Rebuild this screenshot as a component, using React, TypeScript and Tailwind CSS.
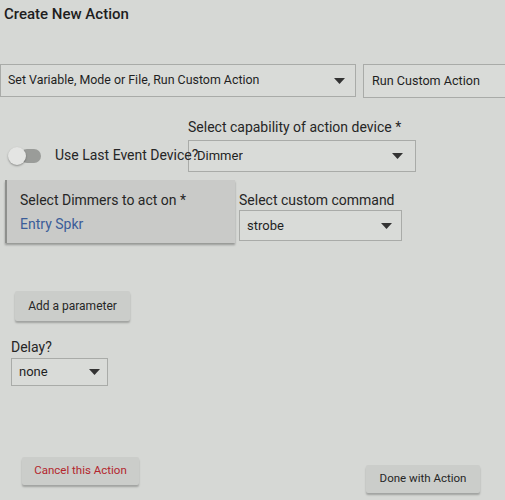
import React from 'react';

const font = { fontFamily: 'Roboto, "Liberation Sans", sans-serif' };

function Caret() {
    return (
        <svg width="11" height="6" viewBox="0 0 11 6" className="flex-shrink-0">
            <path d="M0 0 L11 0 L5.5 6 Z" fill="#333" />
        </svg>
    );
}

const SelectBox: React.FC<{ value: string; className?: string; textClass?: string; caret?: boolean }> = ({
    value,
    className = '',
    textClass = 'text-[13px]',
    caret = true,
}) => (
    <div
        className={`flex items-center justify-between border border-[#a9aba8] bg-[#d9dbd8] text-[#1f1f1f] ${className}`}
    >
        <span className={`truncate ${textClass}`}>{value}</span>
        {caret && <Caret />}
    </div>
);

const RaisedButton: React.FC<{ children: React.ReactNode; className?: string }> = ({ children, className = '' }) => (
    <button
        className={`flex items-center justify-center bg-[#cbcdca] text-[11.5px] shadow-[0_2px_2px_rgba(0,0,0,0.25)] rounded-[2px] ${className}`}
    >
        {children}
    </button>
);

export default function App() {
    return (
        <div
            style={font}
            className="w-[505px] h-[500px] overflow-hidden bg-[#d6d8d5] text-[#262626] flex flex-col"
        >
            {/* Header */}
            <h1 className="pl-[4px] pt-[4px] text-[15px] font-medium leading-5 text-[#1e1e1e]">Create New Action</h1>

            {/* Action type */}
            <div className="mt-[40px] flex gap-[7px] w-[560px]">
                <SelectBox
                    value="Set Variable, Mode or File, Run Custom Action"
                    className="w-[356px] h-[33px] pl-[7px] pr-[10px]"
                    textClass="text-[12.4px]"
                />
                <SelectBox
                    value="Run Custom Action"
                    className="w-[180px] h-[34px] pl-[8px]"
                    textClass="text-[12.6px]"
                    caret={false}
                />
            </div>

            {/* Capability row; the switch label runs past its column into the select */}
            <div className="mt-[19px] flex items-end">
                <div className="relative z-10 w-[188px] h-[33px] flex-shrink-0 flex items-center">
                    <div className="ml-[8px] relative flex-shrink-0 w-[33px] h-[18px] flex items-center">
                        <div className="absolute left-[12px] right-0 h-[14px] rounded-full bg-[#9a9c99]" />
                        <div className="absolute left-0 w-[18px] h-[18px] rounded-full bg-[#e4e5e3] shadow-[0_1px_2px_rgba(0,0,0,0.35)]" />
                    </div>
                    <span className="ml-[14px] text-[14px] whitespace-nowrap">Use Last Event Device?</span>
                </div>
                <div className="flex flex-col">
                    <span className="text-[14px] leading-5 mb-[3px]">Select capability of action device *</span>
                    <SelectBox value="Dimmer" className="w-[228px] h-[32px] pl-[8px] pr-[12px]" />
                </div>
            </div>

            {/* Device + command row */}
            <div className="mt-[8px] flex items-start">
                <div className="ml-[5px] w-[230px] h-[63px] bg-[#c9cac8] border-l-2 border-[#8e908d] shadow-[0_2px_2px_rgba(0,0,0,0.3)] pl-[13px] pt-[10px] flex flex-col">
                    <span className="text-[14px] leading-5">Select Dimmers to act on *</span>
                    <span className="mt-[4px] text-[14px] leading-5 text-[#3b5d99]">Entry Spkr</span>
                </div>
                <div className="ml-[4px] mt-[10px] flex flex-col">
                    <span className="text-[14px] leading-5">Select custom command</span>
                    <SelectBox value="strobe" className="w-[163px] h-[31px] pl-[7px] pr-[9px]" />
                </div>
            </div>

            {/* Parameters */}
            <RaisedButton className="ml-[15px] mt-[48px] w-[115px] h-[30px] text-[12px]">Add a parameter</RaisedButton>

            <span className="ml-[11px] mt-[16px] text-[14px] leading-5">Delay?</span>
            <SelectBox value="none" className="ml-[11px] mt-[1px] w-[97px] h-[28px] pl-[7px] pr-[7px]" />

            {/* Footer actions */}
            <div className="mt-auto mb-[7px] flex items-end justify-between pl-[22px] pr-[25px]">
                <RaisedButton className="mb-[8px] w-[117px] h-[28px] text-[#b3262d]">Cancel this Action</RaisedButton>
                <RaisedButton className="w-[114px] h-[28px]">Done with Action</RaisedButton>
            </div>
        </div>
    );
}
